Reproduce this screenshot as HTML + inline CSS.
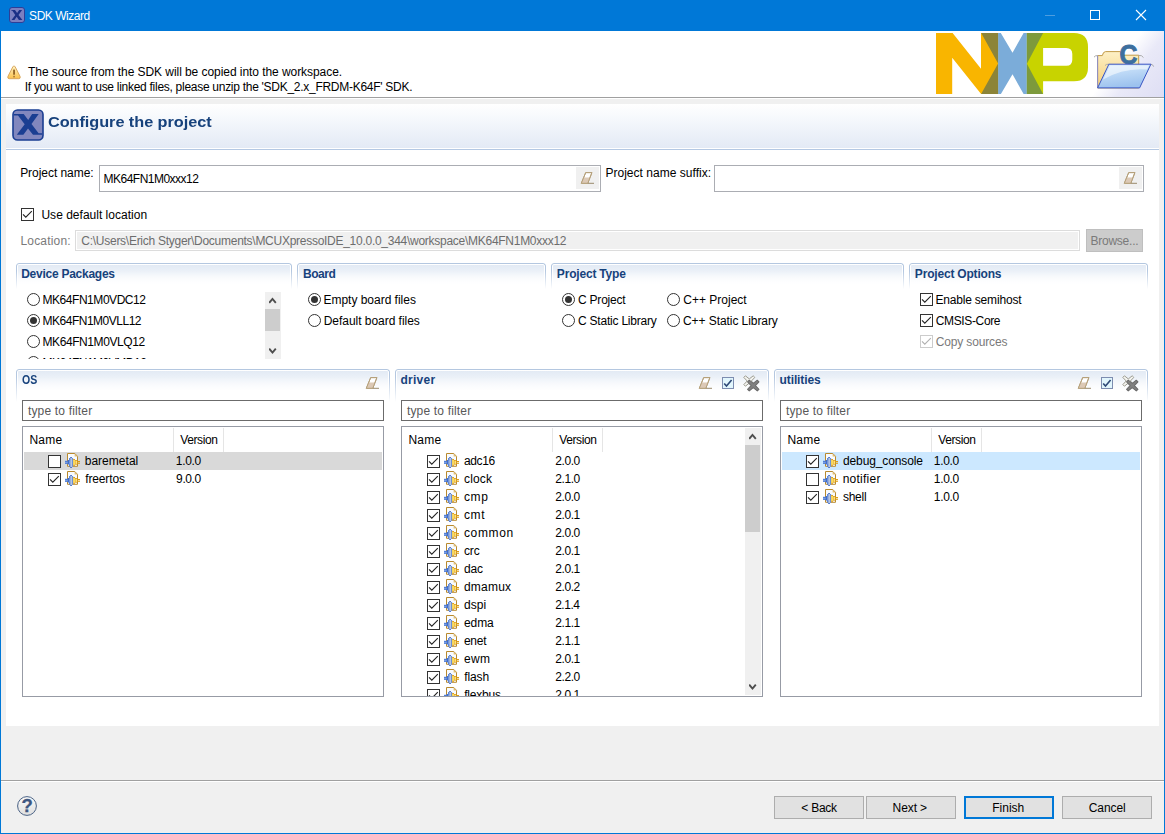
<!DOCTYPE html>
<html lang="en"><head><meta charset="utf-8"><title>SDK Wizard</title>
<style>html,body{margin:0;padding:0}
body{width:1165px;height:834px;overflow:hidden;position:relative;background:#f0f0f0;font-family:"Liberation Sans",sans-serif;font-size:12px;color:#000;line-height:15px}
.a{position:absolute;white-space:nowrap}
.t{position:absolute;white-space:nowrap;transform-origin:0 0}
.titlebar{left:0;top:0;width:1165px;height:31px;background:#0078d7}
.msg{left:1px;top:31px;width:1163px;height:66px;background:#fff;border-bottom:1px solid #a0a0a0}
.form{left:6px;top:104px;width:1153px;height:622px;background:#fff}
.fhead{left:6px;top:104px;width:1153px;height:44px;background:linear-gradient(#fff 0%,#f5f8fc 35%,#e3eaf5 100%);border-bottom:1px solid #fff;box-shadow:0 1px 0 #b4c8e3}
.htitle{font-size:15.5px;font-weight:bold;color:#17427c;line-height:20px}
.inp{background:#fff;border:1px solid #abadb3;box-sizing:border-box}
.sec{box-sizing:border-box;border:1px solid #b4c7e0;border-bottom:none;border-radius:3px 3px 0 0;background:linear-gradient(#e1e9f4 0px,#fff 21px);box-shadow:inset 0 1px 0 #fff,inset 1px 0 0 #fff,inset -1px 0 0 #fff;-webkit-mask-image:linear-gradient(#000 0,#000 8px,transparent 100%);mask-image:linear-gradient(#000 0,#000 8px,transparent 100%)}
.sect{font-weight:bold;color:#17427c}
.radio{width:13px;height:13px;box-sizing:border-box;border:1px solid #333;border-radius:50%;background:#fff}
.radio.on::after{content:"";position:absolute;left:2px;top:2px;width:7px;height:7px;border-radius:50%;background:#333}
.cb{width:13px;height:13px;box-sizing:border-box;border:1px solid #333;background:#fff}
.cb.dis{border-color:#ccc}
.btn{box-sizing:border-box;border:1px solid #adadad;background:#e1e1e1}
.tree{box-sizing:border-box;border:1px solid #979ba5;background:#fff;overflow:hidden}
.filter{box-sizing:border-box;border:1px solid #6b6b6b;background:#fff}
.sb{background:#f0f0f0}
.thumb{background:#cdcdcd}
.gray{color:#7a7a7a}
</style></head>
<body>
<div class="a titlebar"></div>
<svg class="a" style="left:9px;top:7px" width="16" height="16" viewBox="0 0 16 16"><rect x="0.5" y="0.5" width="15" height="15" rx="2.5" fill="#7a7fc0" stroke="#2c3f98"/><path d="M2.4 2.9h3.6l2.1 3.2 2.1-3.2h2.9l-3.6 5 3.9 5.2h-3.5l-2.2-3.3-2.3 3.3h-2.9l3.8-5.2-2.9-4.2h-1z" fill="#1a2f86"/></svg>
<div class="t" style="left:29.12px;top:9px;letter-spacing:-0.480px;color:#fff;">SDK Wizard</div>
<svg class="a" style="left:1045px;top:15px" width="12" height="1" viewBox="0 0 12 1"><rect width="10" height="1" fill="#4d9de0"/></svg>
<svg class="a" style="left:1090px;top:10px" width="10" height="10" viewBox="0 0 10 10"><rect x="0.5" y="0.5" width="9" height="9" fill="none" stroke="#fff"/></svg>
<svg class="a" style="left:1135px;top:9px" width="12" height="12" viewBox="0 0 12 12"><path d="M1 1L11 11M11 1L1 11" stroke="#fff" stroke-width="1.1" fill="none"/></svg>
<div class="a msg"></div>
<svg class="a" style="left:7px;top:65px" width="15" height="15" viewBox="0 0 15 15"><defs><linearGradient id="wg" x1="0" y1="0" x2="0" y2="1"><stop offset="0" stop-color="#fff3c4"/><stop offset="1" stop-color="#fbc04a"/></linearGradient></defs><path d="M7 1Q7.7 1 8.2 1.9L13 11.3Q13.8 13.7 11.8 13.7L2.2 13.7Q0.2 13.7 1 11.3L5.8 1.9Q6.3 1 7 1Z" fill="url(#wg)" stroke="#d9a75e" stroke-width="1" stroke-linejoin="round"/><rect x="6.2" y="4.6" width="1.7" height="5.2" rx="0.5" fill="#8a5a1c"/><rect x="6.2" y="10.8" width="1.7" height="1.6" fill="#a8783a"/></svg>
<div class="t" style="left:28.04px;top:65px;letter-spacing:-0.060px;">The source from the SDK will be copied into the workspace.</div>
<div class="t" style="left:24.74px;top:80px;letter-spacing:-0.279px;">If you want to use linked files, please unzip the 'SDK_2.x_FRDM-K64F' SDK.</div>
<svg class="a" style="left:936px;top:33px" width="152" height="61" viewBox="0 0 152 61"><path d="M0 0H16.6L45 35.8V0H62.1V61H45.1L16.2 24.8V61H0Z" fill="#f9b500"/><path d="M62.1 0H64.8L76.5 19.8L87.6 0H90.9V61H87.6L76.5 41.2L64.9 61H62.1Z" fill="#7bacd9"/><path d="M90.9 0H138Q152 0 152 14V34.3Q152 48.3 138 48.3H107.1V61H90.9Z M107.1 14.9V32.8H130.3Q136.3 32.8 136.3 26.8V20.9Q136.3 14.9 130.3 14.9Z" fill="#c8d300" fill-rule="evenodd"/><path d="M45.2 0H62.1V30.4Z M45.1 61H62.1V30.4Z" fill="#8c8438"/><path d="M90.9 0H107.1L90.9 30.7Z M90.9 61H107.1L90.9 30.7Z" fill="#7d9a3c"/></svg>
<div class="a" style="left:1089px;top:31px;width:75px;height:66px;background:linear-gradient(128deg,rgba(255,255,255,0) 42%,#e9e9f8 62%,#dedef4 100%)"></div>
<svg class="a" style="left:1090px;top:40px" width="70" height="52" viewBox="0 0 70 52"><defs><linearGradient id="fy" x1="0" y1="0" x2="0" y2="1"><stop offset="0" stop-color="#fdf0c6"/><stop offset="1" stop-color="#f5cf7a"/></linearGradient><linearGradient id="fb" x1="0" y1="0" x2="0.3" y2="1"><stop offset="0" stop-color="#d9ecfd"/><stop offset="1" stop-color="#9cc2ee"/></linearGradient></defs><path d="M7.6 47.9V15.6H12.3Q13.2 11.6 15.5 11.6H30.5V15.2H48.7V47.9Z" fill="url(#fy)" stroke="#c29a48" stroke-width="1"/><path d="M7.6 47.9V15.6" stroke="#8d8fc9" stroke-width="1"/><path d="M4 17.2Q5 15.4 7.6 15.6M48.7 15.4Q52 15 53.5 17.6M15 25.5Q16 24 19 24.2M60.8 24.2Q63 24.4 63.6 26.6" stroke="#aaa" stroke-width="1" fill="none"/><text x="29.4" y="24.3" font-family="Liberation Sans,sans-serif" font-weight="bold" font-size="28" fill="#3d6f9e" stroke="#3d6f9e" stroke-width="0.9" textLength="18" lengthAdjust="spacingAndGlyphs">C</text><path d="M18.9 24.2H60.9L49.6 47.9H7.6Z" fill="url(#fb)" stroke="#3a55c4" stroke-width="1" stroke-linejoin="round"/><path d="M20 25.4H59L57 29.5Q34 27.5 13 39.5Z" fill="#fff" opacity="0.55"/></svg>
<div class="a form"></div>
<div class="a fhead"></div>
<svg class="a" style="left:12px;top:109px" width="32" height="32" viewBox="0 0 32 32"><rect x="1" y="1" width="30" height="30" rx="4.5" fill="#8187be" stroke="#1a3e92" stroke-width="1.6"/><path d="M1.8 5.1H11.7L16.2 10.9 20.1 5.1H26.7L19.5 15.1 26.6 24.2H30V25.8H21L16 19.4 11.4 25.8H4.8L12.7 15.2 6 6.6H1.8Z" fill="#1a3e92"/></svg>
<div class="t htitle" style="left:48.30px;top:111.5px;letter-spacing:-0.047px;transform:scaleX(1.05);">Configure the project</div>
<div class="t" style="left:20.15px;top:166px;letter-spacing:-0.046px;">Project name:</div>
<div class="a inp" style="left:99px;top:165px;width:502px;height:27px"></div>
<div class="a" style="left:576px;top:167px;width:23px;height:22px;background:#f0f0f0"></div>
<div class="t" style="left:103.49px;top:172px;letter-spacing:-0.506px;">MK64FN1M0xxx12</div>
<svg class="a" style="left:579.5px;top:171px" width="16" height="14" viewBox="0 0 16 14"><path d="M5.7 1.6H11.9L7.8 12.3H1.3Z" fill="#fff" stroke="#b5a07a" stroke-width="1" stroke-linejoin="round"/><path d="M3.6 6.5H9.9L7.8 12.3H1.3Z" fill="#dcc9b6"/><path d="M5.7 1.6H11.9L7.8 12.3H1.3Z" fill="none" stroke="#b5a07a" stroke-width="1" stroke-linejoin="round"/><path d="M7.8 12.3H14" stroke="#9a8a6c" stroke-width="1"/></svg>
<div class="t" style="left:605.40px;top:166px;letter-spacing:0.027px;">Project name suffix:</div>
<div class="a inp" style="left:714px;top:165px;width:430px;height:27px"></div>
<div class="a" style="left:1119px;top:167px;width:23px;height:22px;background:#f0f0f0"></div>
<svg class="a" style="left:1122.5px;top:171px" width="16" height="14" viewBox="0 0 16 14"><path d="M5.7 1.6H11.9L7.8 12.3H1.3Z" fill="#fff" stroke="#b5a07a" stroke-width="1" stroke-linejoin="round"/><path d="M3.6 6.5H9.9L7.8 12.3H1.3Z" fill="#dcc9b6"/><path d="M5.7 1.6H11.9L7.8 12.3H1.3Z" fill="none" stroke="#b5a07a" stroke-width="1" stroke-linejoin="round"/><path d="M7.8 12.3H14" stroke="#9a8a6c" stroke-width="1"/></svg>
<div class="a cb" style="left:21px;top:208px"><svg class="a" style="left:-1px;top:-1px" width="13" height="13" viewBox="0 0 13 13"><path d="M2 6.3L4.8 9.2 10.8 3.2" fill="none" stroke="#222" stroke-width="1.1"/></svg></div>
<div class="t" style="left:41.44px;top:208px;letter-spacing:0.012px;">Use default location</div>
<div class="t gray" style="left:20.42px;top:234px;letter-spacing:0.196px;">Location:</div>
<div class="a" style="left:75px;top:230px;width:1005px;height:21px;box-sizing:border-box;border:1px solid #dcdcdc;background:#f0f0f0;box-shadow:inset 0 0 0 1px #fff"></div>
<div class="t" style="left:81.35px;top:234px;letter-spacing:-0.271px;color:#6d6d6d;">C:\Users\Erich Styger\Documents\MCUXpressoIDE_10.0.0_344\workspace\MK64FN1M0xxx12</div>
<div class="a btn" style="left:1086px;top:229px;width:57px;height:23px;background:#ccc;border-color:#bfbfbf"></div>
<div class="t gray" style="left:1090.42px;top:234px;letter-spacing:-0.227px;">Browse...</div>
<div class="a sec" style="left:16px;top:263px;width:276px;height:26px"></div>
<div class="t sect" style="left:21.20px;top:267px;letter-spacing:-0.257px;">Device Packages</div>
<div class="a sec" style="left:297px;top:263px;width:249px;height:26px"></div>
<div class="t sect" style="left:302.98px;top:267px;letter-spacing:-0.456px;">Board</div>
<div class="a sec" style="left:551px;top:263px;width:353px;height:26px"></div>
<div class="t sect" style="left:556.85px;top:267px;letter-spacing:-0.187px;">Project Type</div>
<div class="a sec" style="left:909px;top:263px;width:239px;height:26px"></div>
<div class="t sect" style="left:914.85px;top:267px;letter-spacing:-0.192px;">Project Options</div>
<div class="a radio" style="left:27px;top:293px"></div>
<div class="t" style="left:42.49px;top:293px;letter-spacing:-0.452px;">MK64FN1M0VDC12</div>
<div class="a radio on" style="left:27px;top:314px"></div>
<div class="t" style="left:42.49px;top:314px;letter-spacing:-0.489px;">MK64FN1M0VLL12</div>
<div class="a radio" style="left:27px;top:335px"></div>
<div class="t" style="left:42.49px;top:335px;letter-spacing:-0.420px;">MK64FN1M0VLQ12</div>
<div class="a" style="left:20px;top:355px;width:240px;height:4px;overflow:hidden"><div class="a radio" style="left:7px;top:1px"></div></div>
<div class="t" style="left:42.49px;top:356px;letter-spacing:-0.486px;clip-path:inset(0 0 12px 0);">MK64FN1M0VMD12</div>
<div class="a sb" style="left:265px;top:292px;width:16px;height:67px"></div>
<div class="a thumb" style="left:265px;top:309px;width:15px;height:22px"></div>
<svg class="a" style="left:269px;top:297px" width="8" height="7" viewBox="0 0 8 7"><path d="M0.2 5.8L3.5 2 6.8 5.8" fill="none" stroke="#4d4d4d" stroke-width="1.9"/></svg>
<svg class="a" style="left:269px;top:348px" width="8" height="7" viewBox="0 0 8 7"><path d="M0.2 0.7L3.5 4.5 6.8 0.7" fill="none" stroke="#4d4d4d" stroke-width="1.9"/></svg>
<div class="a radio on" style="left:308px;top:293px"></div>
<div class="t" style="left:323.44px;top:293px;letter-spacing:-0.015px;">Empty board files</div>
<div class="a radio" style="left:308px;top:314px"></div>
<div class="t" style="left:323.66px;top:314px;letter-spacing:-0.031px;">Default board files</div>
<div class="a radio on" style="left:562px;top:293px"></div>
<div class="t" style="left:577.99px;top:293px;letter-spacing:-0.211px;">C Project</div>
<div class="a radio" style="left:562px;top:314px"></div>
<div class="t" style="left:577.99px;top:314px;letter-spacing:-0.215px;">C Static Library</div>
<div class="a radio" style="left:667px;top:293px"></div>
<div class="t" style="left:683.23px;top:293px;letter-spacing:0.007px;">C++ Project</div>
<div class="a radio" style="left:667px;top:314px"></div>
<div class="t" style="left:682.99px;top:314px;letter-spacing:-0.068px;">C++ Static Library</div>
<div class="a cb" style="left:920px;top:293px"><svg class="a" style="left:-1px;top:-1px" width="13" height="13" viewBox="0 0 13 13"><path d="M2 6.3L4.8 9.2 10.8 3.2" fill="none" stroke="#222" stroke-width="1.1"/></svg></div>
<div class="t" style="left:935.39px;top:293px;letter-spacing:-0.182px;">Enable semihost</div>
<div class="a cb" style="left:920px;top:314px"><svg class="a" style="left:-1px;top:-1px" width="13" height="13" viewBox="0 0 13 13"><path d="M2 6.3L4.8 9.2 10.8 3.2" fill="none" stroke="#222" stroke-width="1.1"/></svg></div>
<div class="t" style="left:935.78px;top:314px;letter-spacing:-0.365px;">CMSIS-Core</div>
<div class="a cb dis" style="left:920px;top:335px"><svg class="a" style="left:-1px;top:-1px" width="13" height="13" viewBox="0 0 13 13"><path d="M2 6.3L4.8 9.2 10.8 3.2" fill="none" stroke="#b0b0b0" stroke-width="1.1"/></svg></div>
<div class="t gray" style="left:935.78px;top:335px;letter-spacing:-0.156px;">Copy sources</div>
<div class="a sec" style="left:16px;top:369px;width:374px;height:33px"></div>
<div class="t sect" style="left:22.00px;top:373px;transform:scaleX(0.88);">OS</div>
<div class="a sec" style="left:395px;top:369px;width:374px;height:33px"></div>
<div class="t sect" style="left:400.52px;top:373px;letter-spacing:0.255px;">driver</div>
<div class="a sec" style="left:774px;top:369px;width:374px;height:33px"></div>
<div class="t sect" style="left:779.56px;top:373px;letter-spacing:-0.105px;">utilities</div>
<svg class="a" style="left:365px;top:376px" width="16" height="14" viewBox="0 0 16 14"><path d="M5.7 1.6H11.9L7.8 12.3H1.3Z" fill="#fff" stroke="#b5a07a" stroke-width="1" stroke-linejoin="round"/><path d="M3.6 6.5H9.9L7.8 12.3H1.3Z" fill="#dcc9b6"/><path d="M5.7 1.6H11.9L7.8 12.3H1.3Z" fill="none" stroke="#b5a07a" stroke-width="1" stroke-linejoin="round"/><path d="M7.8 12.3H14" stroke="#9a8a6c" stroke-width="1"/></svg>
<svg class="a" style="left:698px;top:376px" width="16" height="14" viewBox="0 0 16 14"><path d="M5.7 1.6H11.9L7.8 12.3H1.3Z" fill="#fff" stroke="#b5a07a" stroke-width="1" stroke-linejoin="round"/><path d="M3.6 6.5H9.9L7.8 12.3H1.3Z" fill="#dcc9b6"/><path d="M5.7 1.6H11.9L7.8 12.3H1.3Z" fill="none" stroke="#b5a07a" stroke-width="1" stroke-linejoin="round"/><path d="M7.8 12.3H14" stroke="#9a8a6c" stroke-width="1"/></svg>
<svg class="a" style="left:722px;top:377px" width="12" height="12" viewBox="0 0 12 12"><rect x="0.5" y="0.5" width="11" height="11" fill="#e2f6fd" stroke="#7d8db0"/><path d="M2.2 6.4L4.5 9.1 9.6 2.9" fill="none" stroke="#2f4a78" stroke-width="1.6"/></svg>
<svg class="a" style="left:743px;top:375px" width="17" height="17" viewBox="0 0 17 17"><path d="M1.6 0L5.5 3.1 9.4 0 11 1.6 7.6 5.2 11 8.8 9.4 10.4 5.5 7.3 1.6 10.4 0 8.8 3.4 5.2 0 1.6Z" transform="translate(0.8,0.8)" fill="#f4f4f0" stroke="#9b9b90" stroke-width="1" stroke-linejoin="round"/><path d="M1.6 0L5.5 3.1 9.4 0 11 1.6 7.6 5.2 11 8.8 9.4 10.4 5.5 7.3 1.6 10.4 0 8.8 3.4 5.2 0 1.6Z" transform="translate(4.6,5.2) scale(1.03)" fill="#808080" stroke="#6a6a6a" stroke-width="1" stroke-linejoin="round"/></svg>
<svg class="a" style="left:1077px;top:376px" width="16" height="14" viewBox="0 0 16 14"><path d="M5.7 1.6H11.9L7.8 12.3H1.3Z" fill="#fff" stroke="#b5a07a" stroke-width="1" stroke-linejoin="round"/><path d="M3.6 6.5H9.9L7.8 12.3H1.3Z" fill="#dcc9b6"/><path d="M5.7 1.6H11.9L7.8 12.3H1.3Z" fill="none" stroke="#b5a07a" stroke-width="1" stroke-linejoin="round"/><path d="M7.8 12.3H14" stroke="#9a8a6c" stroke-width="1"/></svg>
<svg class="a" style="left:1101px;top:377px" width="12" height="12" viewBox="0 0 12 12"><rect x="0.5" y="0.5" width="11" height="11" fill="#e2f6fd" stroke="#7d8db0"/><path d="M2.2 6.4L4.5 9.1 9.6 2.9" fill="none" stroke="#2f4a78" stroke-width="1.6"/></svg>
<svg class="a" style="left:1122px;top:375px" width="17" height="17" viewBox="0 0 17 17"><path d="M1.6 0L5.5 3.1 9.4 0 11 1.6 7.6 5.2 11 8.8 9.4 10.4 5.5 7.3 1.6 10.4 0 8.8 3.4 5.2 0 1.6Z" transform="translate(0.8,0.8)" fill="#f4f4f0" stroke="#9b9b90" stroke-width="1" stroke-linejoin="round"/><path d="M1.6 0L5.5 3.1 9.4 0 11 1.6 7.6 5.2 11 8.8 9.4 10.4 5.5 7.3 1.6 10.4 0 8.8 3.4 5.2 0 1.6Z" transform="translate(4.6,5.2) scale(1.03)" fill="#808080" stroke="#6a6a6a" stroke-width="1" stroke-linejoin="round"/></svg>
<div class="a filter" style="left:22px;top:400px;width:362px;height:21px"></div>
<div class="t" style="left:27.94px;top:404px;letter-spacing:0.168px;color:#585858;">type to filter</div>
<div class="a tree" style="left:22px;top:426px;width:362px;height:271px"></div>
<div class="t" style="left:29.43px;top:433px;letter-spacing:0.271px;">Name</div>
<div class="a" style="left:173px;top:428px;width:1px;height:24px;background:#e5e5e5"></div>
<div class="t" style="left:180.19px;top:433px;letter-spacing:-0.389px;">Version</div>
<div class="a" style="left:223px;top:428px;width:1px;height:24px;background:#e5e5e5"></div>
<div class="a" style="left:24px;top:452px;width:358px;height:18px;background:#d9d9d9"></div>
<div class="a cb" style="left:48px;top:455px"></div>
<svg class="a" style="left:65px;top:452px" width="16" height="16" viewBox="0 0 16 16"><path d="M2.5 1.5H9.8L12.5 4.3V14.3H2.5Z" fill="#f8fbff" stroke="#b98a2e" stroke-width="1" stroke-linejoin="round"/><path d="M9.6 1.7V4.5H12.3Z" fill="#e3bf72"/><rect x="0" y="8.8" width="2.9" height="3.1" fill="#4a7ad4"/><rect x="0" y="9.9" width="2.9" height="0.9" fill="#86a6e4"/><path d="M2.8 8.1H4.2V5.9H5.2V4.95H6.9V5.9H8.1V14.8H6.9V16H5.2V14.8H4.2V12.6H2.8Z" fill="#3f6dcc"/><rect x="4.3" y="8.3" width="1" height="4.1" fill="#8ea9dc"/><rect x="5.3" y="6" width="2.1" height="9" fill="#b6c5e2"/><rect x="8.1" y="7" width="1.9" height="6.8" fill="#dd9c18"/><rect x="8.3" y="7.9" width="1.5" height="5" fill="#ffe873"/><rect x="10" y="8.1" width="2.4" height="4.5" fill="#d8950f"/><rect x="10.4" y="8.8" width="1.7" height="3.1" fill="#ffe27a"/><rect x="12.4" y="9" width="2.6" height="1.1" fill="#dc9c14"/><rect x="12.4" y="10.7" width="2.6" height="1.1" fill="#dc9c14"/></svg>
<div class="t" style="left:84.68px;top:454px;letter-spacing:0.031px;">baremetal</div>
<div class="t" style="left:175.86px;top:454px;letter-spacing:-0.322px;">1.0.0</div>
<div class="a cb" style="left:48px;top:473px"><svg class="a" style="left:-1px;top:-1px" width="13" height="13" viewBox="0 0 13 13"><path d="M2 6.3L4.8 9.2 10.8 3.2" fill="none" stroke="#222" stroke-width="1.1"/></svg></div>
<svg class="a" style="left:65px;top:470px" width="16" height="16" viewBox="0 0 16 16"><path d="M2.5 1.5H9.8L12.5 4.3V14.3H2.5Z" fill="#f8fbff" stroke="#b98a2e" stroke-width="1" stroke-linejoin="round"/><path d="M9.6 1.7V4.5H12.3Z" fill="#e3bf72"/><rect x="0" y="8.8" width="2.9" height="3.1" fill="#4a7ad4"/><rect x="0" y="9.9" width="2.9" height="0.9" fill="#86a6e4"/><path d="M2.8 8.1H4.2V5.9H5.2V4.95H6.9V5.9H8.1V14.8H6.9V16H5.2V14.8H4.2V12.6H2.8Z" fill="#3f6dcc"/><rect x="4.3" y="8.3" width="1" height="4.1" fill="#8ea9dc"/><rect x="5.3" y="6" width="2.1" height="9" fill="#b6c5e2"/><rect x="8.1" y="7" width="1.9" height="6.8" fill="#dd9c18"/><rect x="8.3" y="7.9" width="1.5" height="5" fill="#ffe873"/><rect x="10" y="8.1" width="2.4" height="4.5" fill="#d8950f"/><rect x="10.4" y="8.8" width="1.7" height="3.1" fill="#ffe27a"/><rect x="12.4" y="9" width="2.6" height="1.1" fill="#dc9c14"/><rect x="12.4" y="10.7" width="2.6" height="1.1" fill="#dc9c14"/></svg>
<div class="t" style="left:85.22px;top:472px;letter-spacing:-0.137px;">freertos</div>
<div class="t" style="left:176.10px;top:472px;letter-spacing:-0.387px;">9.0.0</div>
<div class="a filter" style="left:401px;top:400px;width:362px;height:21px"></div>
<div class="t" style="left:406.94px;top:404px;letter-spacing:0.168px;color:#585858;">type to filter</div>
<div class="a tree" style="left:401px;top:426px;width:362px;height:271px"></div>
<div class="t" style="left:408.43px;top:433px;letter-spacing:0.271px;">Name</div>
<div class="a" style="left:552px;top:428px;width:1px;height:24px;background:#e5e5e5"></div>
<div class="t" style="left:559.19px;top:433px;letter-spacing:-0.389px;">Version</div>
<div class="a" style="left:602px;top:428px;width:1px;height:24px;background:#e5e5e5"></div>
<div class="a cb" style="left:427px;top:455px"><svg class="a" style="left:-1px;top:-1px" width="13" height="13" viewBox="0 0 13 13"><path d="M2 6.3L4.8 9.2 10.8 3.2" fill="none" stroke="#222" stroke-width="1.1"/></svg></div>
<svg class="a" style="left:444px;top:452px" width="16" height="16" viewBox="0 0 16 16"><path d="M2.5 1.5H9.8L12.5 4.3V14.3H2.5Z" fill="#f8fbff" stroke="#b98a2e" stroke-width="1" stroke-linejoin="round"/><path d="M9.6 1.7V4.5H12.3Z" fill="#e3bf72"/><rect x="0" y="8.8" width="2.9" height="3.1" fill="#4a7ad4"/><rect x="0" y="9.9" width="2.9" height="0.9" fill="#86a6e4"/><path d="M2.8 8.1H4.2V5.9H5.2V4.95H6.9V5.9H8.1V14.8H6.9V16H5.2V14.8H4.2V12.6H2.8Z" fill="#3f6dcc"/><rect x="4.3" y="8.3" width="1" height="4.1" fill="#8ea9dc"/><rect x="5.3" y="6" width="2.1" height="9" fill="#b6c5e2"/><rect x="8.1" y="7" width="1.9" height="6.8" fill="#dd9c18"/><rect x="8.3" y="7.9" width="1.5" height="5" fill="#ffe873"/><rect x="10" y="8.1" width="2.4" height="4.5" fill="#d8950f"/><rect x="10.4" y="8.8" width="1.7" height="3.1" fill="#ffe27a"/><rect x="12.4" y="9" width="2.6" height="1.1" fill="#dc9c14"/><rect x="12.4" y="10.7" width="2.6" height="1.1" fill="#dc9c14"/></svg>
<div class="t" style="left:463.97px;top:454px;letter-spacing:-0.352px;">adc16</div>
<div class="t" style="left:555.29px;top:454px;letter-spacing:-0.422px;">2.0.0</div>
<div class="a cb" style="left:427px;top:473px"><svg class="a" style="left:-1px;top:-1px" width="13" height="13" viewBox="0 0 13 13"><path d="M2 6.3L4.8 9.2 10.8 3.2" fill="none" stroke="#222" stroke-width="1.1"/></svg></div>
<svg class="a" style="left:444px;top:470px" width="16" height="16" viewBox="0 0 16 16"><path d="M2.5 1.5H9.8L12.5 4.3V14.3H2.5Z" fill="#f8fbff" stroke="#b98a2e" stroke-width="1" stroke-linejoin="round"/><path d="M9.6 1.7V4.5H12.3Z" fill="#e3bf72"/><rect x="0" y="8.8" width="2.9" height="3.1" fill="#4a7ad4"/><rect x="0" y="9.9" width="2.9" height="0.9" fill="#86a6e4"/><path d="M2.8 8.1H4.2V5.9H5.2V4.95H6.9V5.9H8.1V14.8H6.9V16H5.2V14.8H4.2V12.6H2.8Z" fill="#3f6dcc"/><rect x="4.3" y="8.3" width="1" height="4.1" fill="#8ea9dc"/><rect x="5.3" y="6" width="2.1" height="9" fill="#b6c5e2"/><rect x="8.1" y="7" width="1.9" height="6.8" fill="#dd9c18"/><rect x="8.3" y="7.9" width="1.5" height="5" fill="#ffe873"/><rect x="10" y="8.1" width="2.4" height="4.5" fill="#d8950f"/><rect x="10.4" y="8.8" width="1.7" height="3.1" fill="#ffe27a"/><rect x="12.4" y="9" width="2.6" height="1.1" fill="#dc9c14"/><rect x="12.4" y="10.7" width="2.6" height="1.1" fill="#dc9c14"/></svg>
<div class="t" style="left:463.98px;top:472px;letter-spacing:0.158px;">clock</div>
<div class="t" style="left:555.29px;top:472px;letter-spacing:-0.422px;">2.1.0</div>
<div class="a cb" style="left:427px;top:491px"><svg class="a" style="left:-1px;top:-1px" width="13" height="13" viewBox="0 0 13 13"><path d="M2 6.3L4.8 9.2 10.8 3.2" fill="none" stroke="#222" stroke-width="1.1"/></svg></div>
<svg class="a" style="left:444px;top:488px" width="16" height="16" viewBox="0 0 16 16"><path d="M2.5 1.5H9.8L12.5 4.3V14.3H2.5Z" fill="#f8fbff" stroke="#b98a2e" stroke-width="1" stroke-linejoin="round"/><path d="M9.6 1.7V4.5H12.3Z" fill="#e3bf72"/><rect x="0" y="8.8" width="2.9" height="3.1" fill="#4a7ad4"/><rect x="0" y="9.9" width="2.9" height="0.9" fill="#86a6e4"/><path d="M2.8 8.1H4.2V5.9H5.2V4.95H6.9V5.9H8.1V14.8H6.9V16H5.2V14.8H4.2V12.6H2.8Z" fill="#3f6dcc"/><rect x="4.3" y="8.3" width="1" height="4.1" fill="#8ea9dc"/><rect x="5.3" y="6" width="2.1" height="9" fill="#b6c5e2"/><rect x="8.1" y="7" width="1.9" height="6.8" fill="#dd9c18"/><rect x="8.3" y="7.9" width="1.5" height="5" fill="#ffe873"/><rect x="10" y="8.1" width="2.4" height="4.5" fill="#d8950f"/><rect x="10.4" y="8.8" width="1.7" height="3.1" fill="#ffe27a"/><rect x="12.4" y="9" width="2.6" height="1.1" fill="#dc9c14"/><rect x="12.4" y="10.7" width="2.6" height="1.1" fill="#dc9c14"/></svg>
<div class="t" style="left:463.98px;top:490px;letter-spacing:0.636px;">cmp</div>
<div class="t" style="left:555.29px;top:490px;letter-spacing:-0.422px;">2.0.0</div>
<div class="a cb" style="left:427px;top:509px"><svg class="a" style="left:-1px;top:-1px" width="13" height="13" viewBox="0 0 13 13"><path d="M2 6.3L4.8 9.2 10.8 3.2" fill="none" stroke="#222" stroke-width="1.1"/></svg></div>
<svg class="a" style="left:444px;top:506px" width="16" height="16" viewBox="0 0 16 16"><path d="M2.5 1.5H9.8L12.5 4.3V14.3H2.5Z" fill="#f8fbff" stroke="#b98a2e" stroke-width="1" stroke-linejoin="round"/><path d="M9.6 1.7V4.5H12.3Z" fill="#e3bf72"/><rect x="0" y="8.8" width="2.9" height="3.1" fill="#4a7ad4"/><rect x="0" y="9.9" width="2.9" height="0.9" fill="#86a6e4"/><path d="M2.8 8.1H4.2V5.9H5.2V4.95H6.9V5.9H8.1V14.8H6.9V16H5.2V14.8H4.2V12.6H2.8Z" fill="#3f6dcc"/><rect x="4.3" y="8.3" width="1" height="4.1" fill="#8ea9dc"/><rect x="5.3" y="6" width="2.1" height="9" fill="#b6c5e2"/><rect x="8.1" y="7" width="1.9" height="6.8" fill="#dd9c18"/><rect x="8.3" y="7.9" width="1.5" height="5" fill="#ffe873"/><rect x="10" y="8.1" width="2.4" height="4.5" fill="#d8950f"/><rect x="10.4" y="8.8" width="1.7" height="3.1" fill="#ffe27a"/><rect x="12.4" y="9" width="2.6" height="1.1" fill="#dc9c14"/><rect x="12.4" y="10.7" width="2.6" height="1.1" fill="#dc9c14"/></svg>
<div class="t" style="left:463.98px;top:508px;letter-spacing:0.624px;">cmt</div>
<div class="t" style="left:555.29px;top:508px;letter-spacing:-0.430px;">2.0.1</div>
<div class="a cb" style="left:427px;top:527px"><svg class="a" style="left:-1px;top:-1px" width="13" height="13" viewBox="0 0 13 13"><path d="M2 6.3L4.8 9.2 10.8 3.2" fill="none" stroke="#222" stroke-width="1.1"/></svg></div>
<svg class="a" style="left:444px;top:524px" width="16" height="16" viewBox="0 0 16 16"><path d="M2.5 1.5H9.8L12.5 4.3V14.3H2.5Z" fill="#f8fbff" stroke="#b98a2e" stroke-width="1" stroke-linejoin="round"/><path d="M9.6 1.7V4.5H12.3Z" fill="#e3bf72"/><rect x="0" y="8.8" width="2.9" height="3.1" fill="#4a7ad4"/><rect x="0" y="9.9" width="2.9" height="0.9" fill="#86a6e4"/><path d="M2.8 8.1H4.2V5.9H5.2V4.95H6.9V5.9H8.1V14.8H6.9V16H5.2V14.8H4.2V12.6H2.8Z" fill="#3f6dcc"/><rect x="4.3" y="8.3" width="1" height="4.1" fill="#8ea9dc"/><rect x="5.3" y="6" width="2.1" height="9" fill="#b6c5e2"/><rect x="8.1" y="7" width="1.9" height="6.8" fill="#dd9c18"/><rect x="8.3" y="7.9" width="1.5" height="5" fill="#ffe873"/><rect x="10" y="8.1" width="2.4" height="4.5" fill="#d8950f"/><rect x="10.4" y="8.8" width="1.7" height="3.1" fill="#ffe27a"/><rect x="12.4" y="9" width="2.6" height="1.1" fill="#dc9c14"/><rect x="12.4" y="10.7" width="2.6" height="1.1" fill="#dc9c14"/></svg>
<div class="t" style="left:463.98px;top:526px;letter-spacing:0.642px;">common</div>
<div class="t" style="left:555.29px;top:526px;letter-spacing:-0.422px;">2.0.0</div>
<div class="a cb" style="left:427px;top:545px"><svg class="a" style="left:-1px;top:-1px" width="13" height="13" viewBox="0 0 13 13"><path d="M2 6.3L4.8 9.2 10.8 3.2" fill="none" stroke="#222" stroke-width="1.1"/></svg></div>
<svg class="a" style="left:444px;top:542px" width="16" height="16" viewBox="0 0 16 16"><path d="M2.5 1.5H9.8L12.5 4.3V14.3H2.5Z" fill="#f8fbff" stroke="#b98a2e" stroke-width="1" stroke-linejoin="round"/><path d="M9.6 1.7V4.5H12.3Z" fill="#e3bf72"/><rect x="0" y="8.8" width="2.9" height="3.1" fill="#4a7ad4"/><rect x="0" y="9.9" width="2.9" height="0.9" fill="#86a6e4"/><path d="M2.8 8.1H4.2V5.9H5.2V4.95H6.9V5.9H8.1V14.8H6.9V16H5.2V14.8H4.2V12.6H2.8Z" fill="#3f6dcc"/><rect x="4.3" y="8.3" width="1" height="4.1" fill="#8ea9dc"/><rect x="5.3" y="6" width="2.1" height="9" fill="#b6c5e2"/><rect x="8.1" y="7" width="1.9" height="6.8" fill="#dd9c18"/><rect x="8.3" y="7.9" width="1.5" height="5" fill="#ffe873"/><rect x="10" y="8.1" width="2.4" height="4.5" fill="#d8950f"/><rect x="10.4" y="8.8" width="1.7" height="3.1" fill="#ffe27a"/><rect x="12.4" y="9" width="2.6" height="1.1" fill="#dc9c14"/><rect x="12.4" y="10.7" width="2.6" height="1.1" fill="#dc9c14"/></svg>
<div class="t" style="left:463.89px;top:544px;letter-spacing:-0.024px;">crc</div>
<div class="t" style="left:555.29px;top:544px;letter-spacing:-0.430px;">2.0.1</div>
<div class="a cb" style="left:427px;top:563px"><svg class="a" style="left:-1px;top:-1px" width="13" height="13" viewBox="0 0 13 13"><path d="M2 6.3L4.8 9.2 10.8 3.2" fill="none" stroke="#222" stroke-width="1.1"/></svg></div>
<svg class="a" style="left:444px;top:560px" width="16" height="16" viewBox="0 0 16 16"><path d="M2.5 1.5H9.8L12.5 4.3V14.3H2.5Z" fill="#f8fbff" stroke="#b98a2e" stroke-width="1" stroke-linejoin="round"/><path d="M9.6 1.7V4.5H12.3Z" fill="#e3bf72"/><rect x="0" y="8.8" width="2.9" height="3.1" fill="#4a7ad4"/><rect x="0" y="9.9" width="2.9" height="0.9" fill="#86a6e4"/><path d="M2.8 8.1H4.2V5.9H5.2V4.95H6.9V5.9H8.1V14.8H6.9V16H5.2V14.8H4.2V12.6H2.8Z" fill="#3f6dcc"/><rect x="4.3" y="8.3" width="1" height="4.1" fill="#8ea9dc"/><rect x="5.3" y="6" width="2.1" height="9" fill="#b6c5e2"/><rect x="8.1" y="7" width="1.9" height="6.8" fill="#dd9c18"/><rect x="8.3" y="7.9" width="1.5" height="5" fill="#ffe873"/><rect x="10" y="8.1" width="2.4" height="4.5" fill="#d8950f"/><rect x="10.4" y="8.8" width="1.7" height="3.1" fill="#ffe27a"/><rect x="12.4" y="9" width="2.6" height="1.1" fill="#dc9c14"/><rect x="12.4" y="10.7" width="2.6" height="1.1" fill="#dc9c14"/></svg>
<div class="t" style="left:463.95px;top:562px;letter-spacing:-0.110px;">dac</div>
<div class="t" style="left:555.29px;top:562px;letter-spacing:-0.430px;">2.0.1</div>
<div class="a cb" style="left:427px;top:581px"><svg class="a" style="left:-1px;top:-1px" width="13" height="13" viewBox="0 0 13 13"><path d="M2 6.3L4.8 9.2 10.8 3.2" fill="none" stroke="#222" stroke-width="1.1"/></svg></div>
<svg class="a" style="left:444px;top:578px" width="16" height="16" viewBox="0 0 16 16"><path d="M2.5 1.5H9.8L12.5 4.3V14.3H2.5Z" fill="#f8fbff" stroke="#b98a2e" stroke-width="1" stroke-linejoin="round"/><path d="M9.6 1.7V4.5H12.3Z" fill="#e3bf72"/><rect x="0" y="8.8" width="2.9" height="3.1" fill="#4a7ad4"/><rect x="0" y="9.9" width="2.9" height="0.9" fill="#86a6e4"/><path d="M2.8 8.1H4.2V5.9H5.2V4.95H6.9V5.9H8.1V14.8H6.9V16H5.2V14.8H4.2V12.6H2.8Z" fill="#3f6dcc"/><rect x="4.3" y="8.3" width="1" height="4.1" fill="#8ea9dc"/><rect x="5.3" y="6" width="2.1" height="9" fill="#b6c5e2"/><rect x="8.1" y="7" width="1.9" height="6.8" fill="#dd9c18"/><rect x="8.3" y="7.9" width="1.5" height="5" fill="#ffe873"/><rect x="10" y="8.1" width="2.4" height="4.5" fill="#d8950f"/><rect x="10.4" y="8.8" width="1.7" height="3.1" fill="#ffe27a"/><rect x="12.4" y="9" width="2.6" height="1.1" fill="#dc9c14"/><rect x="12.4" y="10.7" width="2.6" height="1.1" fill="#dc9c14"/></svg>
<div class="t" style="left:463.92px;top:580px;letter-spacing:0.225px;">dmamux</div>
<div class="t" style="left:555.29px;top:580px;letter-spacing:-0.420px;">2.0.2</div>
<div class="a cb" style="left:427px;top:599px"><svg class="a" style="left:-1px;top:-1px" width="13" height="13" viewBox="0 0 13 13"><path d="M2 6.3L4.8 9.2 10.8 3.2" fill="none" stroke="#222" stroke-width="1.1"/></svg></div>
<svg class="a" style="left:444px;top:596px" width="16" height="16" viewBox="0 0 16 16"><path d="M2.5 1.5H9.8L12.5 4.3V14.3H2.5Z" fill="#f8fbff" stroke="#b98a2e" stroke-width="1" stroke-linejoin="round"/><path d="M9.6 1.7V4.5H12.3Z" fill="#e3bf72"/><rect x="0" y="8.8" width="2.9" height="3.1" fill="#4a7ad4"/><rect x="0" y="9.9" width="2.9" height="0.9" fill="#86a6e4"/><path d="M2.8 8.1H4.2V5.9H5.2V4.95H6.9V5.9H8.1V14.8H6.9V16H5.2V14.8H4.2V12.6H2.8Z" fill="#3f6dcc"/><rect x="4.3" y="8.3" width="1" height="4.1" fill="#8ea9dc"/><rect x="5.3" y="6" width="2.1" height="9" fill="#b6c5e2"/><rect x="8.1" y="7" width="1.9" height="6.8" fill="#dd9c18"/><rect x="8.3" y="7.9" width="1.5" height="5" fill="#ffe873"/><rect x="10" y="8.1" width="2.4" height="4.5" fill="#d8950f"/><rect x="10.4" y="8.8" width="1.7" height="3.1" fill="#ffe27a"/><rect x="12.4" y="9" width="2.6" height="1.1" fill="#dc9c14"/><rect x="12.4" y="10.7" width="2.6" height="1.1" fill="#dc9c14"/></svg>
<div class="t" style="left:464.04px;top:598px;letter-spacing:-0.001px;">dspi</div>
<div class="t" style="left:555.13px;top:598px;letter-spacing:-0.456px;">2.1.4</div>
<div class="a cb" style="left:427px;top:617px"><svg class="a" style="left:-1px;top:-1px" width="13" height="13" viewBox="0 0 13 13"><path d="M2 6.3L4.8 9.2 10.8 3.2" fill="none" stroke="#222" stroke-width="1.1"/></svg></div>
<svg class="a" style="left:444px;top:614px" width="16" height="16" viewBox="0 0 16 16"><path d="M2.5 1.5H9.8L12.5 4.3V14.3H2.5Z" fill="#f8fbff" stroke="#b98a2e" stroke-width="1" stroke-linejoin="round"/><path d="M9.6 1.7V4.5H12.3Z" fill="#e3bf72"/><rect x="0" y="8.8" width="2.9" height="3.1" fill="#4a7ad4"/><rect x="0" y="9.9" width="2.9" height="0.9" fill="#86a6e4"/><path d="M2.8 8.1H4.2V5.9H5.2V4.95H6.9V5.9H8.1V14.8H6.9V16H5.2V14.8H4.2V12.6H2.8Z" fill="#3f6dcc"/><rect x="4.3" y="8.3" width="1" height="4.1" fill="#8ea9dc"/><rect x="5.3" y="6" width="2.1" height="9" fill="#b6c5e2"/><rect x="8.1" y="7" width="1.9" height="6.8" fill="#dd9c18"/><rect x="8.3" y="7.9" width="1.5" height="5" fill="#ffe873"/><rect x="10" y="8.1" width="2.4" height="4.5" fill="#d8950f"/><rect x="10.4" y="8.8" width="1.7" height="3.1" fill="#ffe27a"/><rect x="12.4" y="9" width="2.6" height="1.1" fill="#dc9c14"/><rect x="12.4" y="10.7" width="2.6" height="1.1" fill="#dc9c14"/></svg>
<div class="t" style="left:464.05px;top:616px;letter-spacing:-0.116px;">edma</div>
<div class="t" style="left:555.29px;top:616px;letter-spacing:-0.430px;">2.1.1</div>
<div class="a cb" style="left:427px;top:635px"><svg class="a" style="left:-1px;top:-1px" width="13" height="13" viewBox="0 0 13 13"><path d="M2 6.3L4.8 9.2 10.8 3.2" fill="none" stroke="#222" stroke-width="1.1"/></svg></div>
<svg class="a" style="left:444px;top:632px" width="16" height="16" viewBox="0 0 16 16"><path d="M2.5 1.5H9.8L12.5 4.3V14.3H2.5Z" fill="#f8fbff" stroke="#b98a2e" stroke-width="1" stroke-linejoin="round"/><path d="M9.6 1.7V4.5H12.3Z" fill="#e3bf72"/><rect x="0" y="8.8" width="2.9" height="3.1" fill="#4a7ad4"/><rect x="0" y="9.9" width="2.9" height="0.9" fill="#86a6e4"/><path d="M2.8 8.1H4.2V5.9H5.2V4.95H6.9V5.9H8.1V14.8H6.9V16H5.2V14.8H4.2V12.6H2.8Z" fill="#3f6dcc"/><rect x="4.3" y="8.3" width="1" height="4.1" fill="#8ea9dc"/><rect x="5.3" y="6" width="2.1" height="9" fill="#b6c5e2"/><rect x="8.1" y="7" width="1.9" height="6.8" fill="#dd9c18"/><rect x="8.3" y="7.9" width="1.5" height="5" fill="#ffe873"/><rect x="10" y="8.1" width="2.4" height="4.5" fill="#d8950f"/><rect x="10.4" y="8.8" width="1.7" height="3.1" fill="#ffe27a"/><rect x="12.4" y="9" width="2.6" height="1.1" fill="#dc9c14"/><rect x="12.4" y="10.7" width="2.6" height="1.1" fill="#dc9c14"/></svg>
<div class="t" style="left:463.92px;top:634px;letter-spacing:-0.235px;">enet</div>
<div class="t" style="left:555.29px;top:634px;letter-spacing:-0.430px;">2.1.1</div>
<div class="a cb" style="left:427px;top:653px"><svg class="a" style="left:-1px;top:-1px" width="13" height="13" viewBox="0 0 13 13"><path d="M2 6.3L4.8 9.2 10.8 3.2" fill="none" stroke="#222" stroke-width="1.1"/></svg></div>
<svg class="a" style="left:444px;top:650px" width="16" height="16" viewBox="0 0 16 16"><path d="M2.5 1.5H9.8L12.5 4.3V14.3H2.5Z" fill="#f8fbff" stroke="#b98a2e" stroke-width="1" stroke-linejoin="round"/><path d="M9.6 1.7V4.5H12.3Z" fill="#e3bf72"/><rect x="0" y="8.8" width="2.9" height="3.1" fill="#4a7ad4"/><rect x="0" y="9.9" width="2.9" height="0.9" fill="#86a6e4"/><path d="M2.8 8.1H4.2V5.9H5.2V4.95H6.9V5.9H8.1V14.8H6.9V16H5.2V14.8H4.2V12.6H2.8Z" fill="#3f6dcc"/><rect x="4.3" y="8.3" width="1" height="4.1" fill="#8ea9dc"/><rect x="5.3" y="6" width="2.1" height="9" fill="#b6c5e2"/><rect x="8.1" y="7" width="1.9" height="6.8" fill="#dd9c18"/><rect x="8.3" y="7.9" width="1.5" height="5" fill="#ffe873"/><rect x="10" y="8.1" width="2.4" height="4.5" fill="#d8950f"/><rect x="10.4" y="8.8" width="1.7" height="3.1" fill="#ffe27a"/><rect x="12.4" y="9" width="2.6" height="1.1" fill="#dc9c14"/><rect x="12.4" y="10.7" width="2.6" height="1.1" fill="#dc9c14"/></svg>
<div class="t" style="left:463.92px;top:652px;letter-spacing:0.364px;">ewm</div>
<div class="t" style="left:555.29px;top:652px;letter-spacing:-0.430px;">2.0.1</div>
<div class="a cb" style="left:427px;top:671px"><svg class="a" style="left:-1px;top:-1px" width="13" height="13" viewBox="0 0 13 13"><path d="M2 6.3L4.8 9.2 10.8 3.2" fill="none" stroke="#222" stroke-width="1.1"/></svg></div>
<svg class="a" style="left:444px;top:668px" width="16" height="16" viewBox="0 0 16 16"><path d="M2.5 1.5H9.8L12.5 4.3V14.3H2.5Z" fill="#f8fbff" stroke="#b98a2e" stroke-width="1" stroke-linejoin="round"/><path d="M9.6 1.7V4.5H12.3Z" fill="#e3bf72"/><rect x="0" y="8.8" width="2.9" height="3.1" fill="#4a7ad4"/><rect x="0" y="9.9" width="2.9" height="0.9" fill="#86a6e4"/><path d="M2.8 8.1H4.2V5.9H5.2V4.95H6.9V5.9H8.1V14.8H6.9V16H5.2V14.8H4.2V12.6H2.8Z" fill="#3f6dcc"/><rect x="4.3" y="8.3" width="1" height="4.1" fill="#8ea9dc"/><rect x="5.3" y="6" width="2.1" height="9" fill="#b6c5e2"/><rect x="8.1" y="7" width="1.9" height="6.8" fill="#dd9c18"/><rect x="8.3" y="7.9" width="1.5" height="5" fill="#ffe873"/><rect x="10" y="8.1" width="2.4" height="4.5" fill="#d8950f"/><rect x="10.4" y="8.8" width="1.7" height="3.1" fill="#ffe27a"/><rect x="12.4" y="9" width="2.6" height="1.1" fill="#dc9c14"/><rect x="12.4" y="10.7" width="2.6" height="1.1" fill="#dc9c14"/></svg>
<div class="t" style="left:464.22px;top:670px;letter-spacing:-0.114px;">flash</div>
<div class="t" style="left:555.29px;top:670px;letter-spacing:-0.422px;">2.2.0</div>
<div class="a" style="left:402px;top:686px;width:343px;height:10px;overflow:hidden"><div class="a cb" style="left:25px;top:3px"><svg class="a" style="left:-1px;top:-1px" width="13" height="13" viewBox="0 0 13 13"><path d="M2 6.3L4.8 9.2 10.8 3.2" fill="none" stroke="#222" stroke-width="1.1"/></svg></div><svg class="a" style="left:42px;top:0px" width="16" height="16" viewBox="0 0 16 16"><path d="M2.5 1.5H9.8L12.5 4.3V14.3H2.5Z" fill="#f8fbff" stroke="#b98a2e" stroke-width="1" stroke-linejoin="round"/><path d="M9.6 1.7V4.5H12.3Z" fill="#e3bf72"/><rect x="0" y="8.8" width="2.9" height="3.1" fill="#4a7ad4"/><rect x="0" y="9.9" width="2.9" height="0.9" fill="#86a6e4"/><path d="M2.8 8.1H4.2V5.9H5.2V4.95H6.9V5.9H8.1V14.8H6.9V16H5.2V14.8H4.2V12.6H2.8Z" fill="#3f6dcc"/><rect x="4.3" y="8.3" width="1" height="4.1" fill="#8ea9dc"/><rect x="5.3" y="6" width="2.1" height="9" fill="#b6c5e2"/><rect x="8.1" y="7" width="1.9" height="6.8" fill="#dd9c18"/><rect x="8.3" y="7.9" width="1.5" height="5" fill="#ffe873"/><rect x="10" y="8.1" width="2.4" height="4.5" fill="#d8950f"/><rect x="10.4" y="8.8" width="1.7" height="3.1" fill="#ffe27a"/><rect x="12.4" y="9" width="2.6" height="1.1" fill="#dc9c14"/><rect x="12.4" y="10.7" width="2.6" height="1.1" fill="#dc9c14"/></svg></div>
<div class="t" style="left:464.17px;top:688px;letter-spacing:-0.193px;clip-path:inset(0 0 7px 0);">flexbus</div>
<div class="t" style="left:555.29px;top:688px;letter-spacing:-0.430px;clip-path:inset(0 0 7px 0);">2.0.1</div>
<div class="a sb" style="left:745px;top:428px;width:16px;height:267px"></div>
<div class="a thumb" style="left:745px;top:445px;width:15px;height:87px"></div>
<svg class="a" style="left:749px;top:433px" width="8" height="7" viewBox="0 0 8 7"><path d="M0.2 5.8L3.5 2 6.8 5.8" fill="none" stroke="#4d4d4d" stroke-width="1.9"/></svg>
<svg class="a" style="left:749px;top:684px" width="8" height="7" viewBox="0 0 8 7"><path d="M0.2 0.7L3.5 4.5 6.8 0.7" fill="none" stroke="#4d4d4d" stroke-width="1.9"/></svg>
<div class="a filter" style="left:780px;top:400px;width:362px;height:21px"></div>
<div class="t" style="left:785.94px;top:404px;letter-spacing:0.168px;color:#585858;">type to filter</div>
<div class="a tree" style="left:780px;top:426px;width:362px;height:271px"></div>
<div class="t" style="left:787.43px;top:433px;letter-spacing:0.271px;">Name</div>
<div class="a" style="left:931px;top:428px;width:1px;height:24px;background:#e5e5e5"></div>
<div class="t" style="left:938.19px;top:433px;letter-spacing:-0.389px;">Version</div>
<div class="a" style="left:981px;top:428px;width:1px;height:24px;background:#e5e5e5"></div>
<div class="a" style="left:782px;top:452px;width:358px;height:18px;background:#cce8ff"></div>
<div class="a cb" style="left:806px;top:455px"><svg class="a" style="left:-1px;top:-1px" width="13" height="13" viewBox="0 0 13 13"><path d="M2 6.3L4.8 9.2 10.8 3.2" fill="none" stroke="#222" stroke-width="1.1"/></svg></div>
<svg class="a" style="left:823px;top:452px" width="16" height="16" viewBox="0 0 16 16"><path d="M2.5 1.5H9.8L12.5 4.3V14.3H2.5Z" fill="#f8fbff" stroke="#b98a2e" stroke-width="1" stroke-linejoin="round"/><path d="M9.6 1.7V4.5H12.3Z" fill="#e3bf72"/><rect x="0" y="8.8" width="2.9" height="3.1" fill="#4a7ad4"/><rect x="0" y="9.9" width="2.9" height="0.9" fill="#86a6e4"/><path d="M2.8 8.1H4.2V5.9H5.2V4.95H6.9V5.9H8.1V14.8H6.9V16H5.2V14.8H4.2V12.6H2.8Z" fill="#3f6dcc"/><rect x="4.3" y="8.3" width="1" height="4.1" fill="#8ea9dc"/><rect x="5.3" y="6" width="2.1" height="9" fill="#b6c5e2"/><rect x="8.1" y="7" width="1.9" height="6.8" fill="#dd9c18"/><rect x="8.3" y="7.9" width="1.5" height="5" fill="#ffe873"/><rect x="10" y="8.1" width="2.4" height="4.5" fill="#d8950f"/><rect x="10.4" y="8.8" width="1.7" height="3.1" fill="#ffe27a"/><rect x="12.4" y="9" width="2.6" height="1.1" fill="#dc9c14"/><rect x="12.4" y="10.7" width="2.6" height="1.1" fill="#dc9c14"/></svg>
<div class="t" style="left:843.04px;top:454px;letter-spacing:-0.128px;">debug_console</div>
<div class="t" style="left:933.86px;top:454px;letter-spacing:-0.322px;">1.0.0</div>
<div class="a cb" style="left:806px;top:473px"></div>
<svg class="a" style="left:823px;top:470px" width="16" height="16" viewBox="0 0 16 16"><path d="M2.5 1.5H9.8L12.5 4.3V14.3H2.5Z" fill="#f8fbff" stroke="#b98a2e" stroke-width="1" stroke-linejoin="round"/><path d="M9.6 1.7V4.5H12.3Z" fill="#e3bf72"/><rect x="0" y="8.8" width="2.9" height="3.1" fill="#4a7ad4"/><rect x="0" y="9.9" width="2.9" height="0.9" fill="#86a6e4"/><path d="M2.8 8.1H4.2V5.9H5.2V4.95H6.9V5.9H8.1V14.8H6.9V16H5.2V14.8H4.2V12.6H2.8Z" fill="#3f6dcc"/><rect x="4.3" y="8.3" width="1" height="4.1" fill="#8ea9dc"/><rect x="5.3" y="6" width="2.1" height="9" fill="#b6c5e2"/><rect x="8.1" y="7" width="1.9" height="6.8" fill="#dd9c18"/><rect x="8.3" y="7.9" width="1.5" height="5" fill="#ffe873"/><rect x="10" y="8.1" width="2.4" height="4.5" fill="#d8950f"/><rect x="10.4" y="8.8" width="1.7" height="3.1" fill="#ffe27a"/><rect x="12.4" y="9" width="2.6" height="1.1" fill="#dc9c14"/><rect x="12.4" y="10.7" width="2.6" height="1.1" fill="#dc9c14"/></svg>
<div class="t" style="left:842.67px;top:472px;letter-spacing:0.254px;">notifier</div>
<div class="t" style="left:933.86px;top:472px;letter-spacing:-0.322px;">1.0.0</div>
<div class="a cb" style="left:806px;top:491px"><svg class="a" style="left:-1px;top:-1px" width="13" height="13" viewBox="0 0 13 13"><path d="M2 6.3L4.8 9.2 10.8 3.2" fill="none" stroke="#222" stroke-width="1.1"/></svg></div>
<svg class="a" style="left:823px;top:488px" width="16" height="16" viewBox="0 0 16 16"><path d="M2.5 1.5H9.8L12.5 4.3V14.3H2.5Z" fill="#f8fbff" stroke="#b98a2e" stroke-width="1" stroke-linejoin="round"/><path d="M9.6 1.7V4.5H12.3Z" fill="#e3bf72"/><rect x="0" y="8.8" width="2.9" height="3.1" fill="#4a7ad4"/><rect x="0" y="9.9" width="2.9" height="0.9" fill="#86a6e4"/><path d="M2.8 8.1H4.2V5.9H5.2V4.95H6.9V5.9H8.1V14.8H6.9V16H5.2V14.8H4.2V12.6H2.8Z" fill="#3f6dcc"/><rect x="4.3" y="8.3" width="1" height="4.1" fill="#8ea9dc"/><rect x="5.3" y="6" width="2.1" height="9" fill="#b6c5e2"/><rect x="8.1" y="7" width="1.9" height="6.8" fill="#dd9c18"/><rect x="8.3" y="7.9" width="1.5" height="5" fill="#ffe873"/><rect x="10" y="8.1" width="2.4" height="4.5" fill="#d8950f"/><rect x="10.4" y="8.8" width="1.7" height="3.1" fill="#ffe27a"/><rect x="12.4" y="9" width="2.6" height="1.1" fill="#dc9c14"/><rect x="12.4" y="10.7" width="2.6" height="1.1" fill="#dc9c14"/></svg>
<div class="t" style="left:842.92px;top:490px;letter-spacing:-0.240px;">shell</div>
<div class="t" style="left:933.86px;top:490px;letter-spacing:-0.322px;">1.0.0</div>
<div class="a" style="left:1px;top:780px;width:1163px;height:1px;background:#a0a0a0"></div>
<div class="a" style="left:1px;top:781px;width:1163px;height:1px;background:#fff"></div>
<div class="a" style="left:1px;top:98px;width:1163px;height:1px;background:#fff"></div>
<svg class="a" style="left:17px;top:796px" width="20" height="20" viewBox="0 0 20 20"><defs><linearGradient id="hg" x1="0" y1="0" x2="0" y2="1"><stop offset="0" stop-color="#fafafa"/><stop offset="1" stop-color="#dedede"/></linearGradient></defs><circle cx="10" cy="10" r="9.4" fill="url(#hg)" stroke="#4a6285" stroke-width="1"/><text x="10.1" y="16.3" text-anchor="middle" font-family="Liberation Sans,sans-serif" font-weight="bold" font-size="18.5" fill="#3d5680" stroke="#3d5680" stroke-width="0.3">?</text></svg>
<div class="a btn" style="left:774px;top:796px;width:90px;height:23px"></div>
<div class="a btn" style="left:866px;top:796px;width:90px;height:23px"></div>
<div class="a btn" style="left:964px;top:796px;width:90px;height:23px;border:2px solid #0078d7"></div>
<div class="a btn" style="left:1062px;top:796px;width:90px;height:23px"></div>
<div class="t" style="left:801.29px;top:801px;letter-spacing:-0.241px;">&lt; Back</div>
<div class="t" style="left:892.62px;top:801px;letter-spacing:-0.101px;">Next &gt;</div>
<div class="t" style="left:992.16px;top:801px;letter-spacing:0.018px;">Finish</div>
<div class="t" style="left:1088.77px;top:801px;letter-spacing:-0.098px;">Cancel</div>
<div class="a" style="left:0;top:31px;width:1px;height:803px;background:#0078d7"></div>
<div class="a" style="left:1164px;top:31px;width:1px;height:803px;background:#0078d7"></div>
<div class="a" style="left:0;top:833px;width:1165px;height:1px;background:#0078d7"></div>
</body></html>
